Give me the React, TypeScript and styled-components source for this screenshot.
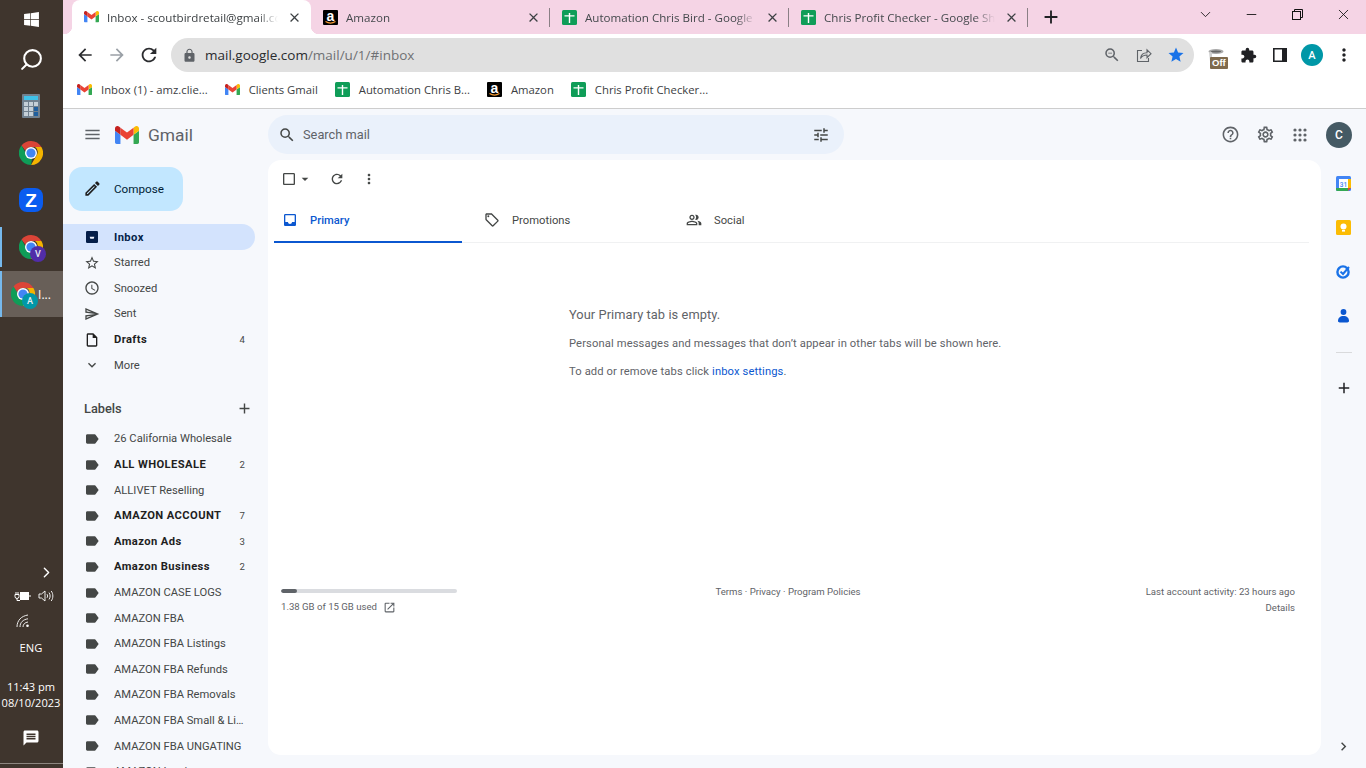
import React from 'react';
import styled, { createGlobalStyle } from 'styled-components';
import { FaWindows } from 'react-icons/fa';
import {
  MdAdd,
  MdArrowBack,
  MdArrowDropDown,
  MdArrowForward,
  MdCheckBoxOutlineBlank,
  MdChevronRight,
  MdClose,
  MdExpandMore,
  MdExtension,
  MdHelpOutline,
  MdInbox,
  MdLabel,
  MdLock,
  MdMenu,
  MdMessage,
  MdMoreVert,
  MdOpenInNew,
  MdOutlineAccessTime,
  MdOutlineEdit,
  MdOutlineInsertDriveFile,
  MdOutlineLocalOffer,
  MdOutlinePeopleAlt,
  MdOutlineSend,
  MdOutlineSettings,
  MdRefresh,
  MdSearch,
  MdStar,
  MdStarBorder,
  MdTune,
  MdZoomOut,
} from 'react-icons/md';
import { LuChevronDown, LuChevronRight, LuMinus, LuSearch, LuX } from 'react-icons/lu';

const GlobalStyle = createGlobalStyle`
  html, body {
    margin: 0;
    padding: 0;
    width: 1366px;
    height: 768px;
    overflow: hidden;
    background: #f6f8fc;
  }
  * { box-sizing: border-box; }
`;

const Desktop = styled.div`
  display: flex;
  width: 1366px;
  height: 768px;
  overflow: hidden;
  font-family: Roboto, "Liberation Sans", sans-serif;
`;

/* windows taskbar */
const Taskbar = styled.aside`
  width: 63px;
  height: 768px;
  flex: none;
  display: flex;
  flex-direction: column;
  background: #3f352d;
  color: #fff;
  font-family: "Open Sans", "Liberation Sans", sans-serif;
`;

const StartButton = styled.div`
  height: 36px;
  padding-top: 3px;
  display: flex;
  align-items: center;
  justify-content: center;
`;

const TaskSearchIcon = styled(LuSearch)`
  transform: scaleX(-1);
`;

const TaskItem = styled.div<{ $active?: boolean; $running?: boolean }>`
  position: relative;
  height: 46px;
  margin-bottom: 1px;
  padding-right: 1px;
  display: flex;
  align-items: center;
  justify-content: center;
  gap: 3px;
  font-size: 12px;
  background: ${p => (p.$active ? '#685f58' : 'transparent')};
  &::before {
    content: '';
    display: ${p => (p.$running ? 'block' : 'none')};
    position: absolute;
    left: 0;
    top: ${p => (p.$active ? 0 : '3px')};
    bottom: ${p => (p.$active ? 0 : '3px')};
    width: 2px;
    background: #76b9ed;
  }
`;

const ChromeBadgeWrap = styled.div`
  position: relative;
  width: 24px;
  height: 24px;
`;

const ChromeBadge = styled.span<{ $color: string }>`
  position: absolute;
  right: -3px;
  bottom: -3px;
  width: 16px;
  height: 16px;
  border-radius: 50%;
  display: flex;
  align-items: center;
  justify-content: center;
  background: ${p => p.$color};
  color: #e8eef2;
  font: 500 9px Roboto, sans-serif;
`;

const Tray = styled.div`
  margin-top: auto;
  margin-bottom: 4px;
  display: flex;
  flex-direction: column;
  align-items: center;
  padding-bottom: 9px;
  border-bottom: 1px solid #8d8680;
`;

const TrayChevron = styled.div`
  width: 100%;
  height: 24px;
  padding-left: 38px;
  display: flex;
  align-items: center;
`;

const TrayRow = styled.div`
  height: 24px;
  width: 100%;
  padding: 0 8px 0 14px;
  display: flex;
  align-items: center;
  justify-content: space-between;
`;

const TrayWifi = styled.div`
  height: 26px;
  width: 100%;
  padding-left: 16px;
  display: flex;
  align-items: center;
`;

const TrayLang = styled.div`
  height: 28px;
  font-size: 11.2px;
  line-height: 28px;
  padding-right: 1px;
`;

const Clock = styled.div`
  margin-top: 17px;
  padding-right: 1px;
  font-size: 11.1px;
  line-height: 16px;
  text-align: center;
  white-space: nowrap;
`;

const Notify = styled.div`
  height: 32px;
  margin-top: 11px;
  padding-right: 1px;
  display: flex;
  align-items: center;
`;

/* browser window */
const Browser = styled.div`
  flex: 1;
  min-width: 0;
  display: flex;
  flex-direction: column;
`;

const TabStrip = styled.div`
  height: 34px;
  flex: none;
  display: flex;
  padding-left: 9px;
  background: #f5d4e5;
  font-family: "Open Sans", "Liberation Sans", sans-serif;
  font-size: 11.6px;
`;

const Tab = styled.div<{ $active?: boolean; $sep?: boolean }>`
  position: relative;
  width: 239px;
  flex: none;
  display: flex;
  align-items: center;
  gap: 8px;
  padding: 0 9px 0 12px;
  color: ${p => (p.$active ? '#3c4043' : '#45494d')};
  background: ${p => (p.$active ? '#fff' : 'transparent')};
  border-radius: ${p => (p.$active ? '8px 8px 0 0' : '0')};
  &::after {
    content: '';
    display: ${p => (p.$sep ? 'block' : 'none')};
    position: absolute;
    right: 0;
    top: 8px;
    bottom: 7px;
    width: 1px;
    background: #8a7f85;
  }
`;

const TabFlare = styled.span<{ $side: 'left' | 'right' }>`
  position: absolute;
  bottom: 0;
  width: 8px;
  height: 8px;
  ${p => (p.$side === 'left' ? 'left: -8px;' : 'right: -8px;')}
  background: radial-gradient(circle at ${p => (p.$side === 'left' ? '0 0' : '100% 0')}, transparent 8px, #fff 8.5px);
`;

const TabTitle = styled.span`
  flex: 1;
  min-width: 0;
  overflow: hidden;
  white-space: nowrap;
  -webkit-mask-image: linear-gradient(90deg, #000 88%, transparent 100%);
  mask-image: linear-gradient(90deg, #000 88%, transparent 100%);
`;

const TabClose = styled.span`
  width: 16px;
  height: 16px;
  flex: none;
  display: flex;
  align-items: center;
  justify-content: center;
  color: #3c4043;
`;

const NewTab = styled.div`
  width: 46px;
  display: flex;
  align-items: center;
  justify-content: center;
  color: #202124;
`;

const WindowControls = styled.div`
  margin-left: auto;
  display: flex;
  height: 28px;
`;

const WindowButton = styled.div`
  width: 46px;
  display: flex;
  align-items: center;
  justify-content: center;
  color: #111;
`;

const Toolbar = styled.div`
  height: 42px;
  flex: none;
  display: flex;
  align-items: flex-start;
  padding: 4px 0 0 6px;
  background: #fff;
`;

const NavButton = styled.div<{ $faded?: boolean }>`
  width: 32px;
  height: 34px;
  flex: none;
  display: flex;
  align-items: center;
  justify-content: center;
  color: ${p => (p.$faded ? '#9aa0a6' : '#2b2c2f')};
`;

const Omnibox = styled.div`
  width: 1023px;
  height: 34px;
  margin-left: 6px;
  flex: none;
  display: flex;
  align-items: center;
  padding: 0 2px 0 11px;
  border-radius: 17px;
  background: #e0e0e0;
  color: #5f6368;
  font-family: "Open Sans", "Liberation Sans", sans-serif;
  font-size: 13.5px;
`;

const Url = styled.span`
  margin-left: 8px;
  flex: 1;
  color: #6f7174;
  span { color: #2a2b2e; }
`;

const OmniIcon = styled.div`
  width: 32px;
  display: flex;
  justify-content: center;
  align-items: center;
`;

const ExtensionSlot = styled.div`
  width: 32px;
  height: 34px;
  flex: none;
  display: flex;
  align-items: center;
  justify-content: center;
  color: #202124;
`;

const ExtensionOff = styled(ExtensionSlot)`
  position: relative;
  margin-left: 6px;
`;

const OffBadge = styled.span`
  position: absolute;
  left: 10px;
  bottom: 3px;
  padding: 0 2px;
  height: 12px;
  border-radius: 1px;
  background: #7f6a4d;
  color: #fff;
  font: 700 9.5px/12px "Liberation Sans", sans-serif;
`;

const ProfileDot = styled.span<{ $size: number; $bg: string; $fs: number }>`
  width: ${p => p.$size}px;
  height: ${p => p.$size}px;
  flex: none;
  display: flex;
  align-items: center;
  justify-content: center;
  border-radius: 50%;
  background: ${p => p.$bg};
  color: #fff;
  font: 500 ${p => p.$fs}px Roboto, sans-serif;
`;

const Bookmarks = styled.div`
  height: 33px;
  flex: none;
  display: flex;
  align-items: center;
  gap: 17px;
  padding: 0 0 5px 14px;
  background: #fff;
  border-bottom: 1px solid #cdcdcd;
  font-family: "Open Sans", "Liberation Sans", sans-serif;
  font-size: 11.3px;
  color: #3c4043;
`;

const Bookmark = styled.div`
  display: flex;
  align-items: center;
  gap: 9px;
  white-space: nowrap;
`;

/* gmail */
const Gmail = styled.div`
  flex: 1;
  min-height: 0;
  display: flex;
  flex-direction: column;
  background: #f6f8fc;
`;

const Header = styled.header`
  height: 51px;
  flex: none;
  display: flex;
  align-items: center;
`;

const Brand = styled.div`
  width: 205px;
  flex: none;
  display: flex;
  align-items: center;
  gap: 13px;
  padding-left: 20px;
  color: #5f6368;
`;

const BrandLogo = styled.div`
  display: flex;
  align-items: center;
  gap: 9px;
`;

const BrandName = styled.span`
  font-size: 17.4px;
  color: #5f6368;
`;

const SearchBar = styled.div`
  width: 576px;
  height: 39px;
  display: flex;
  align-items: center;
  padding: 0 14px 0 10px;
  border-radius: 20px;
  background: #eaf1fb;
  color: #444746;
  font-size: 12.8px;
`;

const SearchText = styled.span`
  flex: 1;
  margin-left: 7px;
  color: #5f6368;
`;

const HeaderActions = styled.div`
  margin-left: auto;
  padding-right: 14px;
  display: flex;
  align-items: center;
  color: #5f6368;
`;

const HeaderIcon = styled.div`
  width: 34.5px;
  display: flex;
  justify-content: center;
`;

const HeaderAvatar = styled.div`
  margin-left: 9px;
`;

const Body = styled.div`
  flex: 1;
  min-height: 0;
  display: flex;
`;

const Sidebar = styled.nav`
  width: 205px;
  flex: none;
  overflow: hidden;
  padding-top: 7px;
`;

const Compose = styled.div`
  width: 114px;
  height: 44px;
  margin: 0 0 13.4px 6px;
  display: flex;
  align-items: center;
  padding-left: 14px;
  padding-bottom: 1px;
  gap: 12px;
  border-radius: 13px;
  background: #c2e7ff;
  color: #001d35;
  font-size: 11.7px;
`;

const NavRow = styled.div<{ $selected?: boolean; $bold?: boolean }>`
  width: 192px;
  height: 25.6px;
  display: flex;
  align-items: center;
  padding: 0 10px 0 21px;
  border-radius: 0 13px 13px 0;
  font-size: 11.2px;
  font-weight: ${p => (p.$bold || p.$selected ? 700 : 400)};
  letter-spacing: ${p => (p.$bold || p.$selected ? '0.4px' : '0')};
  color: ${p => (p.$selected ? '#041e49' : p.$bold ? '#1f1f1f' : '#444746')};
  background: ${p => (p.$selected ? '#d3e3fd' : 'transparent')};
`;

const NavIcon = styled.span`
  width: 16px;
  height: 16px;
  flex: none;
  margin-right: 14px;
  display: flex;
`;

const NavLabel = styled.span`
  flex: 1;
  min-width: 0;
  overflow: hidden;
  white-space: nowrap;
  text-overflow: ellipsis;
`;

const NavCount = styled.span`
  margin-left: 6px;
  font-size: 9.6px;
  font-weight: 400;
  letter-spacing: 0;
  color: #444746;
`;

const LabelsHeading = styled.div`
  width: 192px;
  height: 32px;
  margin: 14.6px 0 1.6px;
  padding: 0 2px 0 21px;
  display: flex;
  align-items: center;
  justify-content: space-between;
  font-size: 12.8px;
  font-weight: 500;
  color: #444746;
`;

const Card = styled.main`
  flex: 1;
  min-width: 0;
  margin-bottom: 13px;
  padding: 0 12px 0 6px;
  border-radius: 13px;
  background: #fff;
`;

const CardToolbar = styled.div`
  height: 38px;
  padding-left: 7px;
  display: flex;
  align-items: center;
  color: #444746;
`;

const CheckGroup = styled.div`
  width: 40px;
  display: flex;
  align-items: center;
`;

const ToolIcon = styled.div`
  width: 32px;
  display: flex;
  justify-content: center;
`;

const Tabs = styled.div`
  height: 45px;
  display: flex;
  border-bottom: 1px solid #f0f1f2;
`;

const InboxTab = styled.div<{ $active?: boolean }>`
  position: relative;
  width: 202px;
  display: flex;
  align-items: center;
  gap: 12px;
  padding-left: 8px;
  font-size: 11.2px;
  letter-spacing: 0.03px;
  font-weight: ${p => (p.$active ? 500 : 400)};
  color: ${p => (p.$active ? '#0b57d0' : '#444746')};
  &::after {
    content: '';
    display: ${p => (p.$active ? 'block' : 'none')};
    position: absolute;
    left: 0;
    bottom: -1px;
    width: 188px;
    height: 2px;
    background: #0b57d0;
  }
`;

const EmptyState = styled.section`
  height: 153px;
  padding: 63px 0 0 295px;
  color: #5f6368;
  font-size: 11.2px;
  letter-spacing: 0.12px;
`;

const EmptyTitle = styled.div`
  font-size: 12.8px;
  letter-spacing: 0.08px;
  line-height: 18px;
  margin-bottom: 11px;
`;

const EmptyLine = styled.div`
  line-height: 18px;
  margin-bottom: 10px;
  a { color: #0b57d0; text-decoration: none; }
`;

const CardFooter = styled.footer`
  margin-top: 188px;
  padding: 0 14px 0 7px;
  display: grid;
  grid-template-columns: 1fr 1fr 1fr;
  font-size: 9.6px;
  line-height: 16px;
  color: #5f6368;
`;

const StorageTrack = styled.div`
  width: 176px;
  height: 4px;
  margin: 5px 0 6px;
  border-radius: 2px;
  background: #dadce0;
  overflow: hidden;
`;

const StorageFill = styled.div`
  height: 100%;
  border-radius: 2px;
  background: #5f6368;
`;

const StorageText = styled.div`
  display: flex;
  align-items: center;
  gap: 6px;
`;

const FooterLinks = styled.div`
  text-align: center;
`;

const FooterRight = styled.div`
  text-align: right;
  letter-spacing: 0.02px;
`;

const Rail = styled.aside`
  width: 45px;
  flex: none;
  display: flex;
  flex-direction: column;
  align-items: center;
  padding: 15.5px 0 13px;
`;

const RailIcon = styled.div`
  height: 44.2px;
  flex: none;
  display: flex;
  align-items: flex-start;
  justify-content: center;
`;

const RailLine = styled.div`
  width: 16px;
  height: 1px;
  flex: none;
  margin: 0 0 26px;
  background: #d9dadc;
`;

const RailChevron = styled.div`
  margin-top: auto;
  color: #444746;
  display: flex;
`;

const Glyph = styled.svg`
  display: block;
  flex: none;
`;

const GmailMark: React.FC<{ w?: number }> = ({ w = 15 }) => (
  <Glyph width={w} height={(w * 66) / 88} viewBox="52 42 88 66">
    <path fill="#4285f4" d="M58 108h14V74L52 59v43c0 3.32 2.69 6 6 6" />
    <path fill="#34a853" d="M120 108h14c3.32 0 6-2.69 6-6V59l-20 15" />
    <path fill="#fbbc04" d="M120 48v26l20-15v-8c0-7.42-8.47-11.65-14.4-7.2" />
    <path fill="#ea4335" d="M72 74V48l24 18 24-18v26L96 92" />
    <path fill="#c5221f" d="M52 51v8l20 15V48l-5.6-4.2c-5.94-4.45-14.4-.22-14.4 7.2" />
  </Glyph>
);

const SheetMark = () => (
  <Glyph width={15} height={15} viewBox="0 0 15 15">
    <rect width="15" height="15" rx="1.5" fill="#0f9d58" />
    <path fill="#fff" d="M6.8 3h1.4v2.2H12.5v1.4H8.2V13H6.8V6.6H2.5V5.2h4.3z" />
  </Glyph>
);

const AmazonMark = () => (
  <Glyph width={15} height={15} viewBox="0 0 15 15">
    <rect width="15" height="15" rx="1" fill="#000" />
    <text x="7.5" y="10.6" textAnchor="middle" fill="#fff" fontFamily="Liberation Sans" fontWeight="700" fontSize="14">a</text>
    <path d="M2.5 11.6c3 1.9 7 1.9 10 0" stroke="#f79c34" strokeWidth="1.2" fill="none" />
  </Glyph>
);

const ChromeMark: React.FC<{ size?: number }> = ({ size = 24 }) => (
  <Glyph width={size} height={size} viewBox="0 0 24 24">
    <path fill="#db4437" d="M12 0a12 12 0 0 1 10.4 6H12a6 6 0 0 0-5.6 3.8L2.5 4.6A12 12 0 0 1 12 0z" />
    <path fill="#f4b400" d="M22.4 6A12 12 0 0 1 12 24l5.2-9A6 6 0 0 0 16 6z" />
    <path fill="#0f9d58" d="M2.5 4.6 7 12.6A6 6 0 0 0 13 18l-1 6A12 12 0 0 1 2.5 4.6z" />
    <circle cx="12" cy="12" r="6" fill="#fff" />
    <circle cx="12" cy="12" r="4.6" fill="#4285f4" />
  </Glyph>
);

const CalcMark = () => (
  <Glyph width={18} height={24} viewBox="0 0 18 24">
    <rect width="18" height="24" rx="1" fill="#70808e" />
    <rect x="2" y="2" width="14" height="4" fill="#3fc1e8" />
    {[0, 1, 2].map(r =>
      [0, 1, 2].map(c => (
        <rect key={`${r}-${c}`} x={2 + c * 5} y={8 + r * 5} width="4" height="4" fill={c === 2 && r > 0 ? '#1f5f9e' : '#c5d0d8'} />
      )),
    )}
  </Glyph>
);

const ZoomMark = () => (
  <Glyph width={24} height={24} viewBox="0 0 24 24">
    <rect width="24" height="24" rx="8" fill="#0a5cf0" />
    <text x="12" y="18.5" textAnchor="middle" fill="#fff" fontFamily="Liberation Sans" fontWeight="700" fontSize="19">Z</text>
  </Glyph>
);

const BatteryMark = () => (
  <Glyph width={17} height={12} viewBox="0 0 17 12" fill="none" stroke="#fff">
    <rect x="6.5" y="2.5" width="8" height="7" fill="#fff" />
    <path d="M16 5v2M1 4.5h4v2a2 2 0 0 1-4 0zM2 2v2.5M4 2v2.5M3 8.5v2h3" />
  </Glyph>
);

const VolumeMark = () => (
  <Glyph width={17} height={14} viewBox="0 0 17 14" fill="none" stroke="#fff" strokeWidth="0.9">
    <path d="M1 5h2.5L7 2v10L3.5 9H1zM9 5.2c.8 1 .8 2.6 0 3.6M11 3.6c1.5 2 1.5 4.8 0 6.8M13.2 2c2.2 3 2.2 7 0 10" />
  </Glyph>
);

const WifiMark = () => (
  <Glyph width={14} height={14} viewBox="0 0 14 14" fill="none" stroke="#fff" strokeWidth="0.9">
    <path d="M1 13C1 6.4 5.4 2 12 1M4 13c0-4.5 3-7.5 8-8.2M7 13c0-2.6 1.8-4.6 5-5" />
    <circle cx="11.5" cy="11.8" r="1.3" fill="#fff" stroke="none" />
  </Glyph>
);

const RestoreMark = () => (
  <Glyph width={11} height={11} viewBox="0 0 11 11" fill="none" stroke="#111">
    <rect x="0.5" y="2.5" width="8" height="8" />
    <path d="M2.5 2.5v-2h8v8h-2" />
  </Glyph>
);

const ShareMark = () => (
  <Glyph width={16} height={16} viewBox="0 0 16 16" fill="none" stroke="#5f6368" strokeWidth="1.1">
    <path d="M6 3.5H1.5v11h11V11" />
    <path d="M4.5 11.5c.5-4 3.5-5.8 6.5-5.8V2.8l4 3.9-4 3.9V8c-2.8 0-5 1-6.5 3.5z" />
  </Glyph>
);

const ExtensionCup = () => (
  <Glyph width={16} height={12} viewBox="0 0 16 12">
    <ellipse cx="8" cy="2.5" rx="7.5" ry="2.5" fill="#a9a9a9" />
    <path d="M1 3h3v9H2z" fill="#cfcfcf" />
    <ellipse cx="8" cy="2.4" rx="5" ry="1" fill="#666" />
  </Glyph>
);

const SidePanelMark = () => (
  <Glyph width={14} height={14} viewBox="0 0 14 14">
    <path fill="#202124" fillRule="evenodd" d="M0 0h14v14H0zM1.6 1.6v10.8H9V1.6z" />
  </Glyph>
);

const AppsMark = () => (
  <Glyph width={14} height={14} viewBox="0 0 14 14" fill="#5f6368">
    {[2, 7, 12].map(y =>
      [2, 7, 12].map(x => <circle key={`${x}-${y}`} cx={x} cy={y} r="1.6" />),
    )}
  </Glyph>
);

const CalendarMark = () => (
  <Glyph width={15} height={15} viewBox="0 0 15 15">
    <rect width="15" height="15" rx="1.5" fill="#4285f4" />
    <rect x="3" y="3" width="9" height="9" fill="#fff" />
    <path d="M12 3h3v9h-3z" fill="#fbbc04" />
    <path d="M0 12h12v3H1.5A1.5 1.5 0 0 1 0 13.5z" fill="#34a853" />
    <path d="M12 12h3l-3 3z" fill="#ea4335" />
    <text x="7.5" y="10.5" textAnchor="middle" fontSize="6.5" fill="#4285f4" fontFamily="Roboto" fontWeight="500">31</text>
  </Glyph>
);

const KeepMark = () => (
  <Glyph width={15} height={15} viewBox="0 0 15 15">
    <rect width="15" height="15" rx="1.5" fill="#fbbc04" />
    <circle cx="7.5" cy="6.5" r="3" fill="#fff" />
    <rect x="6" y="10" width="3" height="1.6" fill="#fff" />
  </Glyph>
);

const TasksMark = () => (
  <Glyph width={15} height={15} viewBox="0 0 15 15">
    <circle cx="7" cy="8" r="5.6" fill="none" stroke="#1a73e8" strokeWidth="2.4" />
    <path d="M4.5 7.6 7 10l6-7" fill="none" stroke="#1a73e8" strokeWidth="2" />
  </Glyph>
);

const ContactsMark = () => (
  <Glyph width={15} height={15} viewBox="0 0 15 15">
    <circle cx="7.5" cy="4" r="2.9" fill="#0b57d0" />
    <path d="M2 13c0-3 2-5 5.5-5s5.5 2 5.5 5c0 1-1 1.4-1.6 1.4H3.6C3 14.4 2 14 2 13z" fill="#0b57d0" />
  </Glyph>
);

const SelectedInboxMark = () => (
  <Glyph width={16} height={16} viewBox="0 0 24 24">
    <rect x="3" y="3" width="18" height="18" rx="2" fill="#041e49" />
    <path d="M5.5 5.5h13v8h-3.6c-.5 1.4-1.6 2.2-2.9 2.2s-2.4-.8-2.9-2.2H5.5z" fill="#041e49" />
    <path d="M8.5 11.5h7l-1 3h-5z" fill="#eef3fd" />
  </Glyph>
);

const browserTabs = [
  { title: 'Inbox - scoutbirdretail@gmail.com - Gmail', icon: <GmailMark />, active: true, sep: false },
  { title: 'Amazon', icon: <AmazonMark />, active: false, sep: true },
  { title: 'Automation Chris Bird - Google Sheets', icon: <SheetMark />, active: false, sep: true },
  { title: 'Chris Profit Checker - Google Sheets', icon: <SheetMark />, active: false, sep: true },
];

const bookmarks = [
  { title: 'Inbox (1) - amz.clie...', icon: <GmailMark /> },
  { title: 'Clients Gmail', icon: <GmailMark /> },
  { title: 'Automation Chris B...', icon: <SheetMark /> },
  { title: 'Amazon', icon: <AmazonMark /> },
  { title: 'Chris Profit Checker...', icon: <SheetMark /> },
];

const labels = [
  { name: '26 California Wholesale' },
  { name: 'ALL WHOLESALE', count: 2 },
  { name: 'ALLIVET Reselling' },
  { name: 'AMAZON ACCOUNT', count: 7 },
  { name: 'Amazon Ads', count: 3 },
  { name: 'Amazon Business', count: 2 },
  { name: 'AMAZON CASE LOGS' },
  { name: 'AMAZON FBA' },
  { name: 'AMAZON FBA Listings' },
  { name: 'AMAZON FBA Refunds' },
  { name: 'AMAZON FBA Removals' },
  { name: 'AMAZON FBA Small & Light' },
  { name: 'AMAZON FBA UNGATING' },
  { name: 'AMAZON Invoices' },
];

const App: React.FC = () => (
  <>
    <GlobalStyle />
    <Desktop>
      <Taskbar>
        <StartButton>
          <FaWindows size={17} color="#fff" />
        </StartButton>
        <TaskItem>
          <TaskSearchIcon size={25} color="#fff" />
        </TaskItem>
        <TaskItem>
          <CalcMark />
        </TaskItem>
        <TaskItem>
          <ChromeMark />
        </TaskItem>
        <TaskItem>
          <ZoomMark />
        </TaskItem>
        <TaskItem $running>
          <ChromeBadgeWrap>
            <ChromeMark />
            <ChromeBadge $color="#512da8">V</ChromeBadge>
          </ChromeBadgeWrap>
        </TaskItem>
        <TaskItem $running $active>
          <ChromeBadgeWrap>
            <ChromeMark />
            <ChromeBadge $color="#0097a7">A</ChromeBadge>
          </ChromeBadgeWrap>
          <span>I...</span>
        </TaskItem>
        <Tray>
          <TrayChevron>
            <LuChevronRight size={17} />
          </TrayChevron>
          <TrayRow>
            <BatteryMark />
            <VolumeMark />
          </TrayRow>
          <TrayWifi>
            <WifiMark />
          </TrayWifi>
          <TrayLang>ENG</TrayLang>
          <Clock>
            11:43 pm
            <br />
            08/10/2023
          </Clock>
          <Notify>
            <MdMessage size={18} />
          </Notify>
        </Tray>
      </Taskbar>

      <Browser>
        <TabStrip>
          {browserTabs.map(tab => (
            <Tab key={tab.title} $active={tab.active} $sep={tab.sep}>
              {tab.active && <TabFlare $side="left" />}
              {tab.active && <TabFlare $side="right" />}
              {tab.icon}
              <TabTitle>{tab.title}</TabTitle>
              <TabClose>
                <MdClose size={15} />
              </TabClose>
            </Tab>
          ))}
          <NewTab>
            <MdAdd size={22} />
          </NewTab>
          <WindowControls>
            <WindowButton>
              <LuChevronDown size={17} strokeWidth={1.2} />
            </WindowButton>
            <WindowButton>
              <LuMinus size={15} strokeWidth={1.4} />
            </WindowButton>
            <WindowButton>
              <RestoreMark />
            </WindowButton>
            <WindowButton>
              <LuX size={17} strokeWidth={1.2} />
            </WindowButton>
          </WindowControls>
        </TabStrip>

        <Toolbar>
          <NavButton>
            <MdArrowBack size={20} />
          </NavButton>
          <NavButton $faded>
            <MdArrowForward size={20} />
          </NavButton>
          <NavButton>
            <MdRefresh size={22} />
          </NavButton>
          <Omnibox>
            <MdLock size={15} />
            <Url>
              <span>mail.google.com</span>/mail/u/1/#inbox
            </Url>
            <OmniIcon>
              <MdZoomOut size={18} />
            </OmniIcon>
            <OmniIcon>
              <ShareMark />
            </OmniIcon>
            <OmniIcon>
              <MdStar size={18} color="#1a73e8" />
            </OmniIcon>
          </Omnibox>
          <ExtensionOff>
            <ExtensionCup />
            <OffBadge>Off</OffBadge>
          </ExtensionOff>
          <ExtensionSlot>
            <MdExtension size={17} />
          </ExtensionSlot>
          <ExtensionSlot>
            <SidePanelMark />
          </ExtensionSlot>
          <ExtensionSlot>
            <ProfileDot $size={22} $bg="#0097a7" $fs={11}>A</ProfileDot>
          </ExtensionSlot>
          <ExtensionSlot>
            <MdMoreVert size={20} />
          </ExtensionSlot>
        </Toolbar>

        <Bookmarks>
          {bookmarks.map(b => (
            <Bookmark key={b.title}>
              {b.icon}
              <span>{b.title}</span>
            </Bookmark>
          ))}
        </Bookmarks>

        <Gmail>
          <Header>
            <Brand>
              <MdMenu size={19} />
              <BrandLogo>
                <GmailMark w={24} />
                <BrandName>Gmail</BrandName>
              </BrandLogo>
            </Brand>
            <SearchBar>
              <MdSearch size={18} />
              <SearchText>Search mail</SearchText>
              <MdTune size={18} />
            </SearchBar>
            <HeaderActions>
              <HeaderIcon>
                <MdHelpOutline size={19} />
              </HeaderIcon>
              <HeaderIcon>
                <MdOutlineSettings size={19} />
              </HeaderIcon>
              <HeaderIcon>
                <AppsMark />
              </HeaderIcon>
              <HeaderAvatar>
                <ProfileDot $size={26} $bg="#455a64" $fs={12}>C</ProfileDot>
              </HeaderAvatar>
            </HeaderActions>
          </Header>

          <Body>
            <Sidebar>
              <Compose>
                <MdOutlineEdit size={19} color="#1f1f1f" />
                Compose
              </Compose>
              <NavRow $selected>
                <NavIcon><SelectedInboxMark /></NavIcon>
                <NavLabel>Inbox</NavLabel>
              </NavRow>
              <NavRow>
                <NavIcon><MdStarBorder size={16} /></NavIcon>
                <NavLabel>Starred</NavLabel>
              </NavRow>
              <NavRow>
                <NavIcon><MdOutlineAccessTime size={16} /></NavIcon>
                <NavLabel>Snoozed</NavLabel>
              </NavRow>
              <NavRow>
                <NavIcon><MdOutlineSend size={16} /></NavIcon>
                <NavLabel>Sent</NavLabel>
              </NavRow>
              <NavRow $bold>
                <NavIcon><MdOutlineInsertDriveFile size={16} /></NavIcon>
                <NavLabel>Drafts</NavLabel>
                <NavCount>4</NavCount>
              </NavRow>
              <NavRow>
                <NavIcon><MdExpandMore size={16} /></NavIcon>
                <NavLabel>More</NavLabel>
              </NavRow>
              <LabelsHeading>
                Labels
                <MdAdd size={17} />
              </LabelsHeading>
              {labels.map(l => (
                <NavRow key={l.name} $bold={l.count !== undefined}>
                  <NavIcon><MdLabel size={16} color="#444746" /></NavIcon>
                  <NavLabel>{l.name}</NavLabel>
                  {l.count !== undefined && <NavCount>{l.count}</NavCount>}
                </NavRow>
              ))}
            </Sidebar>

            <Card>
              <CardToolbar>
                <CheckGroup>
                  <MdCheckBoxOutlineBlank size={16} />
                  <MdArrowDropDown size={16} />
                </CheckGroup>
                <ToolIcon>
                  <MdRefresh size={16} />
                </ToolIcon>
                <ToolIcon>
                  <MdMoreVert size={16} />
                </ToolIcon>
              </CardToolbar>
              <Tabs>
                <InboxTab $active>
                  <MdInbox size={16} />
                  Primary
                </InboxTab>
                <InboxTab>
                  <MdOutlineLocalOffer size={16} />
                  Promotions
                </InboxTab>
                <InboxTab>
                  <MdOutlinePeopleAlt size={16} />
                  Social
                </InboxTab>
              </Tabs>
              <EmptyState>
                <EmptyTitle>Your Primary tab is empty.</EmptyTitle>
                <EmptyLine>Personal messages and messages that don’t appear in other tabs will be shown here.</EmptyLine>
                <EmptyLine>
                  To add or remove tabs click <a href="#settings">inbox settings</a>.
                </EmptyLine>
              </EmptyState>
              <CardFooter>
                <div>
                  <StorageTrack>
                    <StorageFill style={{ width: `${(1.38 / 15) * 100}%` }} />
                  </StorageTrack>
                  <StorageText>
                    1.38 GB of 15 GB used
                    <MdOpenInNew size={13} />
                  </StorageText>
                </div>
                <FooterLinks>Terms · Privacy · Program Policies</FooterLinks>
                <FooterRight>
                  Last account activity: 23 hours ago
                  <br />
                  Details
                </FooterRight>
              </CardFooter>
            </Card>

            <Rail>
              <RailIcon><CalendarMark /></RailIcon>
              <RailIcon><KeepMark /></RailIcon>
              <RailIcon><TasksMark /></RailIcon>
              <RailIcon><ContactsMark /></RailIcon>
              <RailLine />
              <MdAdd size={18} color="#202124" />
              <RailChevron>
                <MdChevronRight size={17} />
              </RailChevron>
            </Rail>
          </Body>
        </Gmail>
      </Browser>
    </Desktop>
  </>
);

export default App;
